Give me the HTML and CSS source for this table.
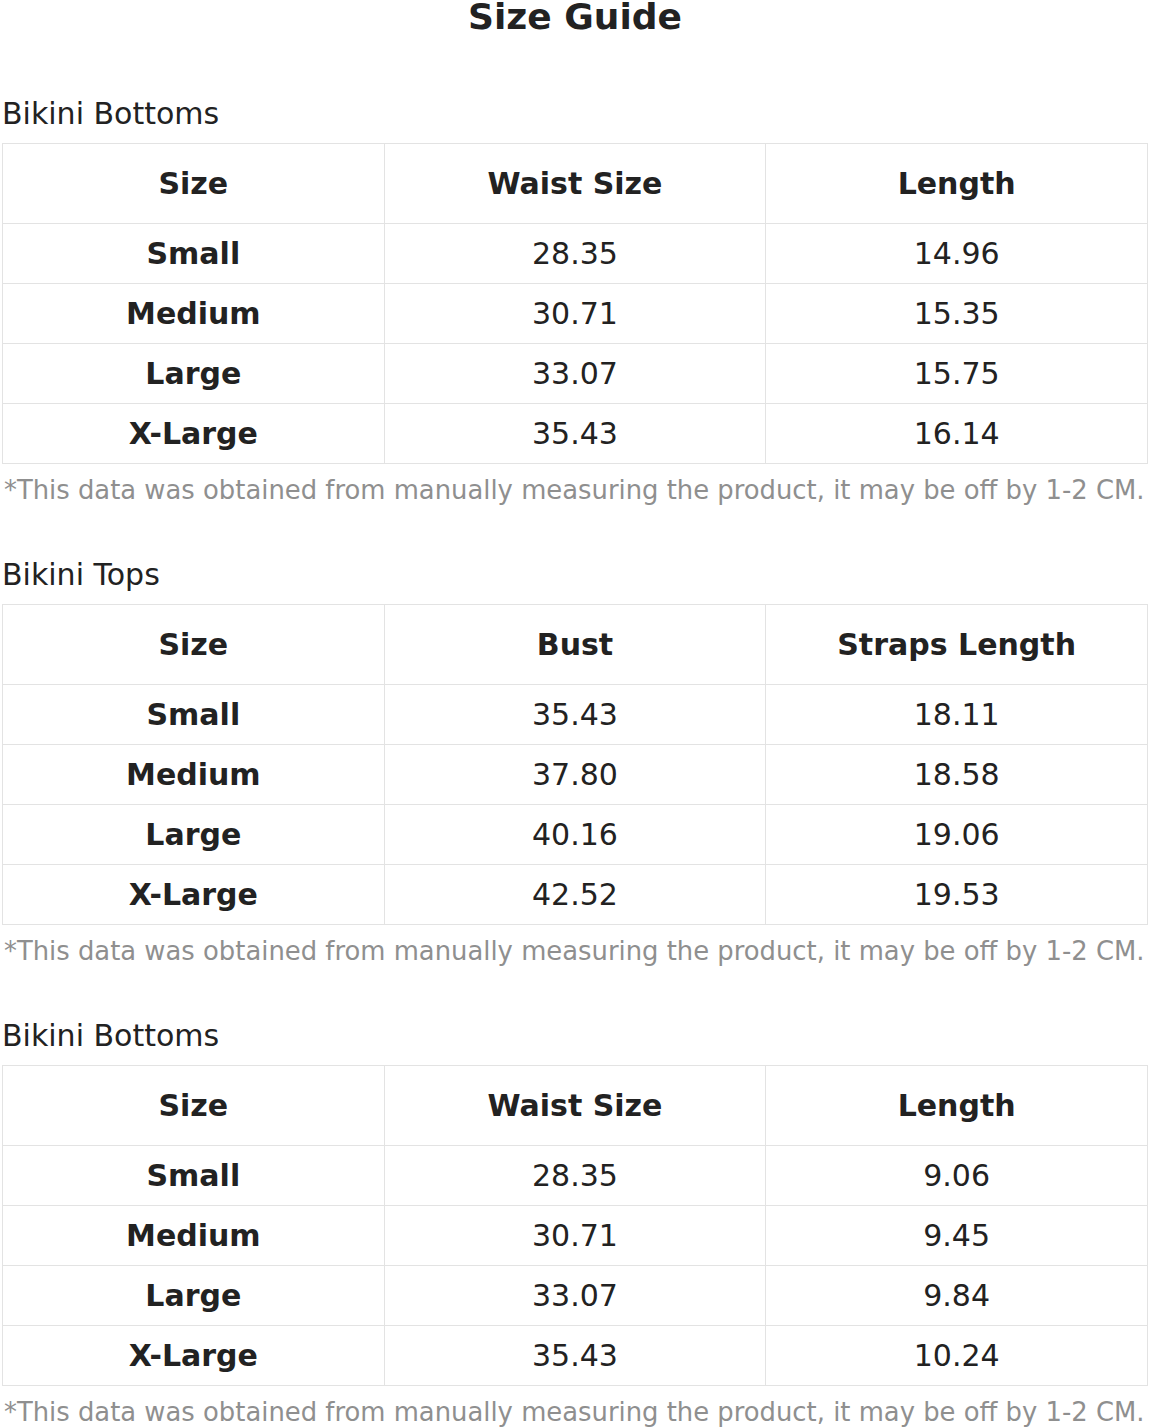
FILE: index.html
```html
<!DOCTYPE html>
<html lang="en">
<head>
<meta charset="utf-8">
<title>Size Guide</title>
<link rel="stylesheet" href="styles.css">
</head>
<body>
<main class="page">
  <h1 class="title">Size Guide</h1>

  <section class="guide">
    <h2 class="guide-title">Bikini Bottoms</h2>
    <table class="size-table">
      <thead>
        <tr><th>Size</th><th>Waist Size</th><th>Length</th></tr>
      </thead>
      <tbody>
        <tr><th>Small</th><td>28.35</td><td>14.96</td></tr>
        <tr><th>Medium</th><td>30.71</td><td>15.35</td></tr>
        <tr><th>Large</th><td>33.07</td><td>15.75</td></tr>
        <tr><th>X-Large</th><td>35.43</td><td>16.14</td></tr>
      </tbody>
    </table>
    <p class="note">*This data was obtained from manually measuring the product, it may be off by 1-2 CM.</p>
  </section>

  <section class="guide">
    <h2 class="guide-title">Bikini Tops</h2>
    <table class="size-table">
      <thead>
        <tr><th>Size</th><th>Bust</th><th>Straps Length</th></tr>
      </thead>
      <tbody>
        <tr><th>Small</th><td>35.43</td><td>18.11</td></tr>
        <tr><th>Medium</th><td>37.80</td><td>18.58</td></tr>
        <tr><th>Large</th><td>40.16</td><td>19.06</td></tr>
        <tr><th>X-Large</th><td>42.52</td><td>19.53</td></tr>
      </tbody>
    </table>
    <p class="note">*This data was obtained from manually measuring the product, it may be off by 1-2 CM.</p>
  </section>

  <section class="guide">
    <h2 class="guide-title">Bikini Bottoms</h2>
    <table class="size-table">
      <thead>
        <tr><th>Size</th><th>Waist Size</th><th>Length</th></tr>
      </thead>
      <tbody>
        <tr><th>Small</th><td>28.35</td><td>9.06</td></tr>
        <tr><th>Medium</th><td>30.71</td><td>9.45</td></tr>
        <tr><th>Large</th><td>33.07</td><td>9.84</td></tr>
        <tr><th>X-Large</th><td>35.43</td><td>10.24</td></tr>
      </tbody>
    </table>
    <p class="note">*This data was obtained from manually measuring the product, it may be off by 1-2 CM.</p>
  </section>
</main>
</body>
</html>
```

FILE: styles.css
```css
html, body {
  margin: 0;
  padding: 0;
  background: #ffffff;
  overflow: hidden;
}

body {
  font-family: "DejaVu Sans", "Liberation Sans", sans-serif;
  color: #222222;
}

.page {
  padding: 0 3px 0 2px;
}

.title {
  margin: 0 0 62px;
  font-size: 36px;
  line-height: 34px;
  font-weight: bold;
  text-align: center;
  color: #222222;
}

.guide {
  margin: 0 0 52px;
}

.guide:last-child {
  margin-bottom: 0;
}

.guide-title {
  margin: 0 0 12px;
  font-size: 30px;
  line-height: 35px;
  font-weight: normal;
  color: #222222;
}

.size-table {
  width: 100%;
  table-layout: fixed;
  border-collapse: collapse;
  font-size: 30px;
  line-height: 35px;
}

.size-table th,
.size-table td {
  border: 1px solid #e3e3e3;
  padding: 0;
  text-align: center;
  vertical-align: middle;
  height: 59px;
}

.size-table th {
  font-weight: bold;
}

.size-table td {
  font-weight: normal;
}

.size-table thead th {
  height: 79px;
}

.note {
  margin: 11px 0 0;
  padding-left: 2px;
  font-size: 25.85px;
  line-height: 30px;
  color: #8f8f8f;
  white-space: nowrap;
}
```
